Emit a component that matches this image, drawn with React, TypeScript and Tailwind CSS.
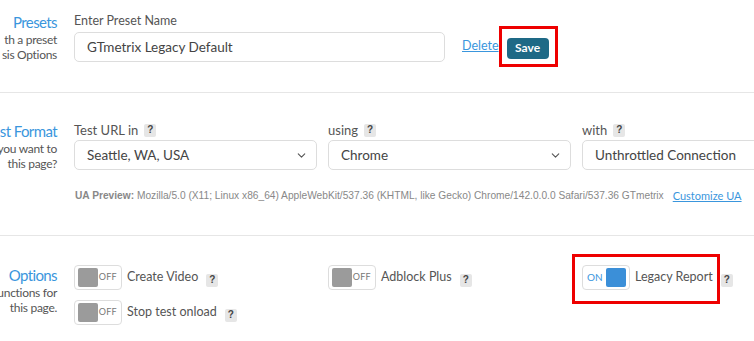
import { FiChevronDown } from 'react-icons/fi';

const SectionTitle = ({ title, lines }: { title: string; lines: string[] }) => (
  <div className="w-[57px] shrink-0 flex flex-col items-end">
    <div className="whitespace-nowrap text-[15px] tracking-[-0.6px] leading-[20px] text-[#3a96dd]">{title}</div>
    {lines.map((l) => (
      <div key={l} className="whitespace-nowrap text-[12px] tracking-[-0.3px] leading-[15px] text-[#555]">
        {l}
      </div>
    ))}
  </div>
);

const Help = () => (
  <span className="inline-flex items-center justify-center w-[12px] h-[13px] bg-[#e6e6e6] rounded-[2px] text-[10px] font-bold text-[#444] font-['Liberation_Sans',sans-serif] leading-none">
    ?
  </span>
);

const Select = ({ value }: { value: string }) => (
  <div className="h-[30px] border border-[#ddd] rounded-[5px] bg-white flex items-center justify-between pl-[12px] pr-[8px] text-[13.5px] text-[#444]">
    <span className="whitespace-nowrap">{value}</span>
    <FiChevronDown className="text-[#555] w-[13px] h-[13px]" />
  </div>
);

const Toggle = ({ on }: { on?: boolean }) => (
  <div className="w-[48px] h-[25px] border border-[#ddd] rounded-[4px] bg-white flex items-center px-[3px] shrink-0">
    {on ? (
      <>
        <span className="flex-1 text-[10px] text-[#3a96dd] pl-[1px]">ON</span>
        <span className="w-[20px] h-[19px] rounded-[2px] bg-[#3b8fd8]" />
      </>
    ) : (
      <>
        <span className="w-[20px] h-[19px] rounded-[2px] bg-[#9b9b9b]" />
        <span className="flex-1 text-right text-[9px] text-[#777] pr-[1px] tracking-[0.3px]">OFF</span>
      </>
    )}
  </div>
);

const Option = ({ label, on, boxed }: { label: string; on?: boolean; boxed?: boolean }) => (
  <div className="flex items-center gap-[6px]">
    <div className="relative flex items-center gap-[5px]">
      <Toggle on={on} />
      <span className="text-[12.5px] leading-[18px] text-[#555] whitespace-nowrap">{label}</span>
      {boxed && <div className="absolute -left-[10px] -top-[11px] -right-[7px] -bottom-[14px] border-[3px] border-[#ee0000]" />}
    </div>
    <span className="ml-[2px]">
      <Help />
    </span>
  </div>
);

export default function App() {
  return (
    <div className="w-full h-[341px] overflow-hidden bg-white font-['Lato',sans-serif]">
      <div className="flex gap-[17px] pt-[12px] pb-[30px] border-b border-[#e6e6e6]">
        <SectionTitle title="Presets" lines={['th a preset', 'sis Options']} />
        <div className="flex items-end">
          <div className="w-[371px]">
            <div className="text-[12.5px] leading-[18px] text-[#555] mb-[2px]">Enter Preset Name</div>
            <div className="h-[30px] border border-[#ddd] rounded-[5px] flex items-center pl-[12px] text-[13.5px] text-[#444]">
              GTmetrix Legacy Default
            </div>
          </div>
          <div className="flex items-center h-[30px] ml-[17px] gap-[8px] pb-[1px]">
            <a className="text-[12.5px] text-[#3a96dd] underline">Delete</a>
            <div className="relative">
              <button className="h-[21px] w-[42px] rounded-[4px] bg-[#1e6986] text-white text-[12px] font-bold">Save</button>
              <div className="absolute -left-[8px] -top-[8px] -right-[9px] -bottom-[8px] border-[3px] border-[#ee0000]" />
            </div>
          </div>
        </div>
      </div>

      <div className="flex gap-[17px] pt-[28px] pb-[30px] border-b border-[#e6e6e6]">
        <SectionTitle title="st Format" lines={['you want to', 'this page?']} />
        <div className="flex-1 min-w-0">
          <div className="grid grid-cols-[243px_243px_243px] gap-x-[11px]">
            {[
              ['Test URL in', 'Seattle, WA, USA'],
              ['using', 'Chrome'],
              ['with', 'Unthrottled Connection'],
            ].map(([l, v]) => (
              <div key={l}>
                <div className="flex items-center gap-[6px] text-[13px] leading-[18px] text-[#555] mb-[1px]">
                  {l} <Help />
                </div>
                <Select value={v} />
              </div>
            ))}
          </div>
          <div className="mt-[18px] flex items-center whitespace-nowrap">
            <span className="font-['Liberation_Sans',sans-serif] text-[10.2px] leading-[16px] text-[#888] pl-[1px]">
              <b>UA Preview:</b> Mozilla/5.0 (X11; Linux x86_64) AppleWebKit/537.36 (KHTML, like Gecko) Chrome/142.0.0.0 Safari/537.36 GTmetrix
            </span>
            <a className="ml-[9px] text-[11px] text-[#3a96dd] underline">Customize UA</a>
          </div>
        </div>
      </div>

      <div className="flex gap-[17px] pt-[29px]">
        <SectionTitle title="Options" lines={['unctions for', 'this page.']} />
        <div className="flex-1 min-w-0 grid grid-cols-[243px_243px_243px] gap-x-[11px]">
          <div className="flex flex-col gap-[10px]">
            <Option label="Create Video" />
            <Option label="Stop test onload" />
          </div>
          <div>
            <Option label="Adblock Plus" />
          </div>
          <div>
            <Option label="Legacy Report" on boxed />
          </div>
        </div>
      </div>
    </div>
  );
}
